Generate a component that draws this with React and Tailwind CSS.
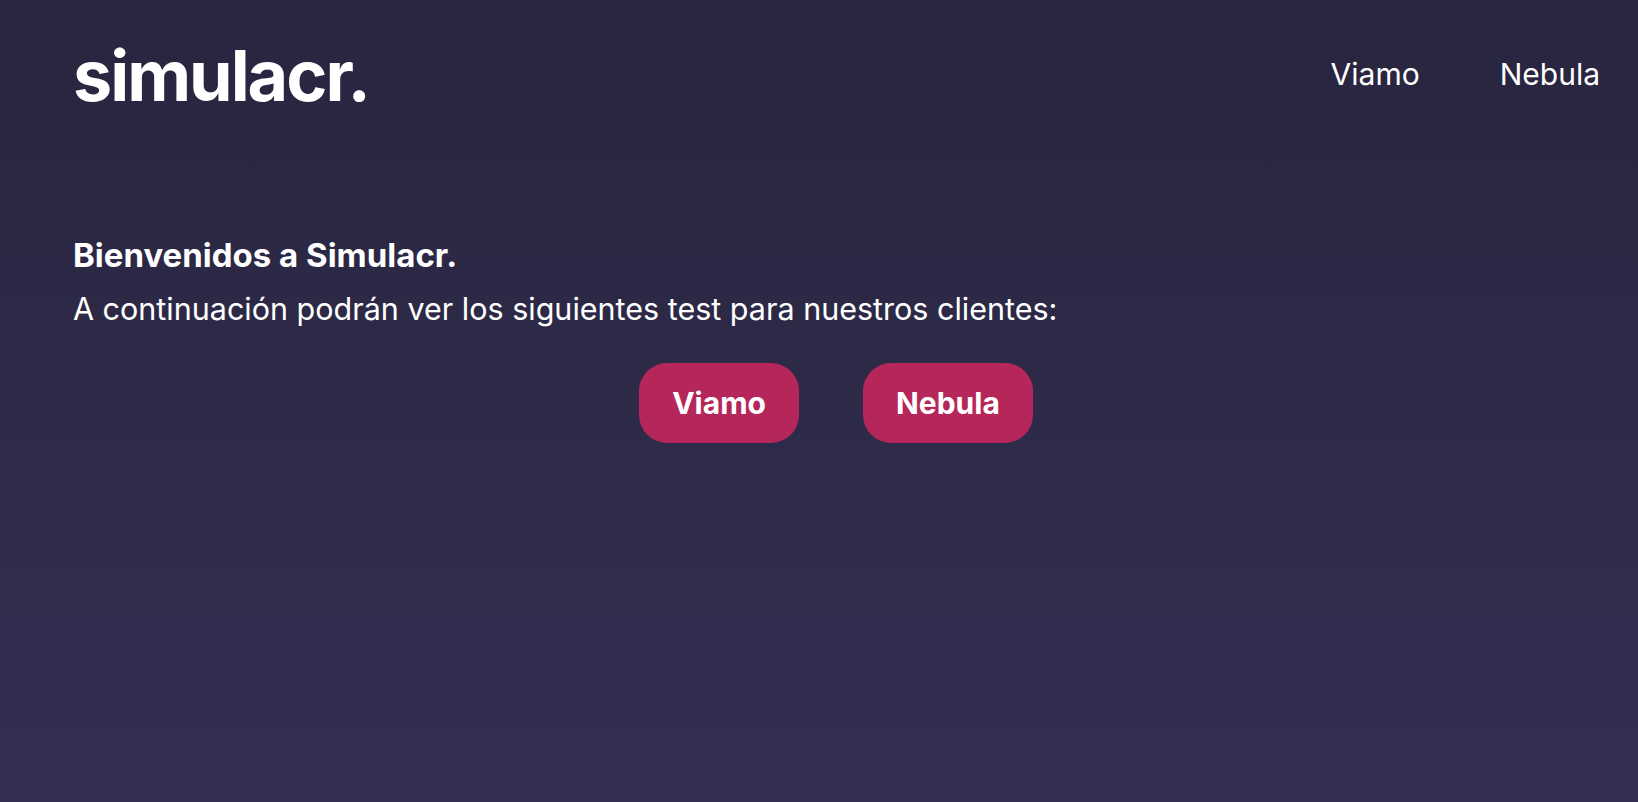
const App = () => {
  return (
    <div
      className="min-h-[802px] w-full bg-gradient-to-b from-[#28253f] to-[#332f52] text-white"
      style={{ fontFamily: "Inter, 'Noto Sans', sans-serif" }}
    >
      {/* header */}
      <header className="flex items-start justify-between pl-[73px] pr-[38px] pt-[36px]">
        <h1 className="text-[70px] font-bold leading-[80px] tracking-[-2px]">simulacr.</h1>
        <nav className="flex gap-[80px] pt-[16px] text-[30px] leading-[44px]">
          <a href="#">Viamo</a>
          <a href="#">Nebula</a>
        </nav>
      </header>

      {/* content */}
      <main className="px-[73px] pt-[119px]">
        <h2 className="text-[33px] font-bold leading-[40px]">Bienvenidos a Simulacr.</h2>
        <p className="mt-[14px] text-[30.5px] leading-[40px]">
          A continuación podrán ver los siguientes test para nuestros clientes:
        </p>
        <div className="mt-[34px] flex justify-center gap-[64px] pl-[34px]">
          <button className="h-[80px] rounded-[28px] bg-[#b5275a] px-[33px] text-[30px] font-bold">
            Viamo
          </button>
          <button className="h-[80px] rounded-[28px] bg-[#b5275a] px-[33px] text-[30px] font-bold">
            Nebula
          </button>
        </div>
      </main>
    </div>
  );
};
export default App;
